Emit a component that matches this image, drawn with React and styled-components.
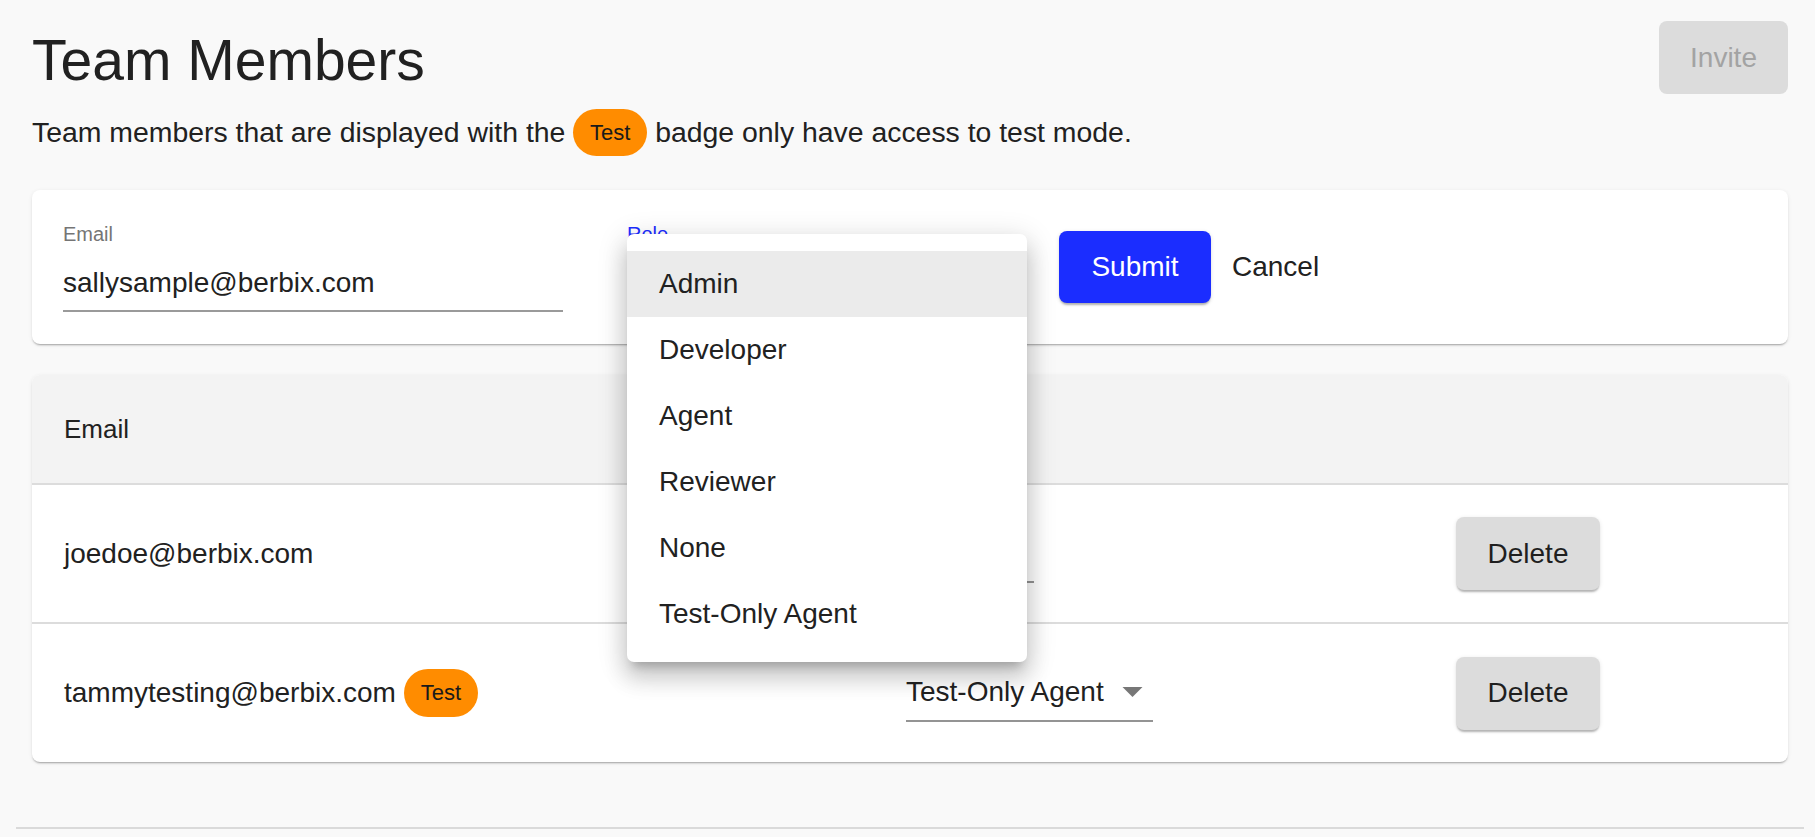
import styled, { createGlobalStyle } from "styled-components";

const GlobalStyle = createGlobalStyle`
  body {
    margin: 0;
    background: #f9f9f9;
    font-family: "Liberation Sans", Arial, sans-serif;
    color: #212121;
  }
`;

const ROLES = ["Admin", "Developer", "Agent", "Reviewer", "None", "Test-Only Agent"];

const MEMBERS = [
  { email: "joedoe@berbix.com", role: "Admin", test: false },
  { email: "tammytesting@berbix.com", role: "Test-Only Agent", test: true },
];

function ArrowDown() {
  return (
    <Arrow viewBox="0 0 20 10" aria-hidden="true">
      <path d="M0 0 L10 10 L20 0 Z" />
    </Arrow>
  );
}

function App() {
  return (
    <Page>
      <GlobalStyle />
      <Content>
        <Header>
          <Title>Team Members</Title>
          <InviteButton disabled>Invite</InviteButton>
        </Header>
        <Subtitle>
          <span>Team members that are displayed with the </span>
          <Badge>Test</Badge>
          <span> badge only have access to test mode.</span>
        </Subtitle>

        <FormCard>
          <Field $width={500} $gap={64}>
            <FieldLabel>Email</FieldLabel>
            <InputValue>sallysample@berbix.com</InputValue>
          </Field>
          <Field $width={400} $gap={32}>
            <FieldLabel $focused>Role</FieldLabel>
            <InputValue $focused>&nbsp;</InputValue>
            <Menu>
              {ROLES.map((role, i) => (
                <MenuItem key={role} $selected={i === 0}>
                  {role}
                </MenuItem>
              ))}
            </Menu>
          </Field>
          <SubmitButton>Submit</SubmitButton>
          <CancelButton>Cancel</CancelButton>
        </FormCard>

        <TableCard>
          <HeaderRow>
            <HeadCell>Email</HeadCell>
            <HeadCell>Role</HeadCell>
            <HeadCell />
          </HeaderRow>
          {MEMBERS.map((m, i) => (
            <Row key={m.email} $last={i === MEMBERS.length - 1}>
              <Cell>
                {m.email}
                {m.test && <RowBadge>Test</RowBadge>}
              </Cell>
              <Cell>
                <RoleSelect>
                  {m.role}
                  <ArrowDown />
                </RoleSelect>
              </Cell>
              <Cell>
                <DeleteButton>Delete</DeleteButton>
              </Cell>
            </Row>
          ))}
        </TableCard>
      </Content>
      <Divider />
    </Page>
  );
}

const Page = styled.div`
  min-height: 837px;
  padding: 0 11px 0 16px;
  box-sizing: border-box;
`;

const Content = styled.div`
  padding: 0 16px;
`;

const Header = styled.div`
  display: flex;
  justify-content: space-between;
  align-items: flex-start;
  padding-top: 21px;
`;

const Title = styled.h1`
  margin: 6px 0 0 0;
  font-size: 57px;
  font-weight: 400;
  line-height: 67px;
  color: #212121;
`;

const BaseButton = styled.button`
  font-family: "Liberation Sans", Arial, sans-serif;
  font-size: 28px;
  border: none;
  border-radius: 8px;
  cursor: pointer;
  padding: 0;
  display: flex;
  align-items: center;
  justify-content: center;
  flex-shrink: 0;
`;

const InviteButton = styled(BaseButton)`
  width: 129px;
  height: 73px;
  background: #dcdcdc;
  color: #a3a3a3;
  cursor: default;
`;

const Subtitle = styled.div`
  display: flex;
  align-items: center;
  height: 47px;
  margin-top: 15px;
  font-size: 28.4px;
  line-height: 47px;
  white-space: pre;
`;

const Badge = styled.span`
  display: inline-flex;
  align-items: center;
  justify-content: center;
  width: 74px;
  height: 47px;
  border-radius: 24px;
  background: #ff8c00;
  color: #1a1a1a;
  font-size: 22px;
  line-height: 1;
  flex-shrink: 0;
`;

const RowBadge = styled(Badge)`
  height: 48px;
  margin-left: 8px;
`;

const Card = styled.div`
  background: #ffffff;
  border-radius: 8px;
  box-shadow: 0 2px 2px -1px rgba(0, 0, 0, 0.32), 0 1px 4px rgba(0, 0, 0, 0.08);
`;

const FormCard = styled(Card)`
  margin-top: 34px;
  height: 154px;
  box-sizing: border-box;
  padding-left: 31px;
  display: flex;
  align-items: center;
`;

const Field = styled.div`
  position: relative;
  display: flex;
  flex-direction: column;
  width: ${({ $width }) => $width}px;
  margin-right: ${({ $gap }) => $gap}px;
  flex-shrink: 0;
`;

const FieldLabel = styled.div`
  font-size: 20px;
  line-height: 24px;
  color: ${({ $focused }) => ($focused ? "#1b2dff" : "#757575")};
`;

const InputValue = styled.div`
  margin-top: 19px;
  font-size: 28px;
  line-height: 36px;
  padding-bottom: 9px;
  border-bottom: 2px solid ${({ $focused }) => ($focused ? "#1b2dff" : "#9a9a9a")};
  color: #212121;
`;

const Menu = styled.div`
  position: absolute;
  top: 12px;
  left: 0;
  width: 400px;
  z-index: 10;
  background: #ffffff;
  border-radius: 7px;
  padding: 17px 0 15px;
  box-shadow: 0 10px 10px -6px rgba(0, 0, 0, 0.2), 0 16px 22px 2px rgba(0, 0, 0, 0.14),
    0 6px 28px 4px rgba(0, 0, 0, 0.12);
`;

const MenuItem = styled.div`
  height: 66px;
  padding-left: 32px;
  display: flex;
  align-items: center;
  font-size: 28px;
  color: #212121;
  background: ${({ $selected }) => ($selected ? "#ebebeb" : "transparent")};
`;

const SubmitButton = styled(BaseButton)`
  width: 152px;
  height: 72px;
  background: #1b2dff;
  color: #ffffff;
  box-shadow: 0 3px 2px -1px rgba(0, 0, 0, 0.25), 0 1px 4px rgba(0, 0, 0, 0.12);
`;

const CancelButton = styled(BaseButton)`
  height: 72px;
  margin-left: 5px;
  padding: 0 16px;
  background: transparent;
  color: #212121;
`;

const TableCard = styled(Card)`
  margin-top: 31px;
  overflow: hidden;
`;

const Grid = styled.div`
  display: grid;
  grid-template-columns: 842px 550px 1fr;
`;

const HeaderRow = styled(Grid)`
  height: 108px;
  background: #f3f3f3;
  border-bottom: 2px solid #dcdcdc;
`;

const HeadCell = styled.div`
  padding: 0 32px;
  display: flex;
  align-items: center;
  font-size: 26px;
  color: #212121;
`;

const Row = styled(Grid)`
  height: ${({ $last }) => ($last ? 138 : 137)}px;
  border-bottom: ${({ $last }) => ($last ? "none" : "2px solid #dcdcdc")};
`;

const Cell = styled.div`
  padding: 0 32px;
  display: flex;
  align-items: center;
  font-size: 28px;
  color: #212121;
`;

const RoleSelect = styled.div`
  display: inline-flex;
  align-items: center;
  padding: 10px 10px 10px 0;
  line-height: 36px;
  border-bottom: 2px solid #949494;
`;

const Arrow = styled.svg`
  width: 21px;
  height: 10px;
  margin-left: 18px;
  fill: #777777;
`;

const DeleteButton = styled(BaseButton)`
  width: 144px;
  height: 73px;
  background: #dcdcdc;
  color: #1f1f1f;
  box-shadow: 0 3px 2px -1px rgba(0, 0, 0, 0.25), 0 1px 4px rgba(0, 0, 0, 0.1);
`;

const Divider = styled.div`
  margin-top: 65px;
  height: 2px;
  background: #dadada;
`;

export default App;
